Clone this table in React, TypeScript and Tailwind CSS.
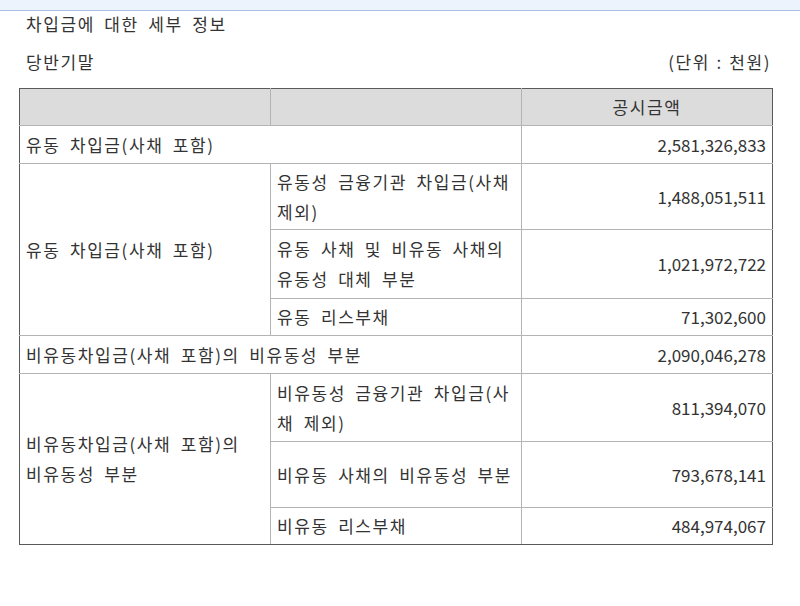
import React from "react";

type Row = {
  label?: string[];
  labelSpan?: number;
  labelRows?: number;
  sub?: string[];
  amount: string;
  h: string;
};

const rows: Row[] = [
  { label: ["유동 차입금(사채 포함)"], labelSpan: 2, amount: "2,581,326,833", h: "h-[38px]" },
  {
    label: ["유동 차입금(사채 포함)"],
    labelRows: 3,
    sub: ["유동성 금융기관 차입금(사채", "제외)"],
    amount: "1,488,051,511",
    h: "h-[66px]",
  },
  { sub: ["유동 사채 및 비유동 사채의", "유동성 대체 부분"], amount: "1,021,972,722", h: "h-[69px]" },
  { sub: ["유동 리스부채"], amount: "71,302,600", h: "h-[37px]" },
  { label: ["비유동차입금(사채 포함)의 비유동성 부분"], labelSpan: 2, amount: "2,090,046,278", h: "h-[38px]" },
  {
    label: ["비유동차입금(사채 포함)의", "비유동성 부분"],
    labelRows: 3,
    sub: ["비유동성 금융기관 차입금(사", "채 제외)"],
    amount: "811,394,070",
    h: "h-[68px]",
  },
  { sub: ["비유동 사채의 비유동성 부분"], amount: "793,678,141", h: "h-[66px]" },
  { sub: ["비유동 리스부채"], amount: "484,974,067", h: "h-[37px]" },
];

function Lines({ lines }: { lines: string[] }) {
  return (
    <>
      {lines.map((l, i) => (
        <div key={i} className="whitespace-nowrap">
          {l}
        </div>
      ))}
    </>
  );
}

export default function App() {
  const cell = "border border-[#b4b4b4] px-[6px] py-0 align-middle leading-[30px]";
  return (
    <div
      className="w-[800px] h-[606px] bg-white text-[#333] text-[17px] tracking-[1.6px] [word-spacing:4px] overflow-hidden"
      style={{ fontFamily: '"Noto Sans CJK KR", "Liberation Sans", sans-serif' }}
    >
      {/* top strip */}
      <div className="h-[11px] bg-[#edf3fc] border-b border-[#a9c1e2]" />

      <div className="px-[19px]">
        <div className="pl-[7px] leading-[26px]">차입금에 대한 세부 정보</div>

        <div className="mt-[12px] flex justify-between pl-[7px] pr-[10px] leading-[26px]">
          <span>당반기말</span>
          <span className="[word-spacing:1px]">(단위 : 천원)</span>
        </div>

        <table className="mt-[13px] w-[753px] table-fixed border-collapse border border-[#5a5a5a]">
          <colgroup>
            <col className="w-[251px]" />
            <col className="w-[251px]" />
            <col className="w-[251px]" />
          </colgroup>
          <thead>
            <tr className="h-[37px] bg-[#dcdcdc]">
              <th className={cell + " border-t-[#5a5a5a] border-l-[#5a5a5a]"} />
              <th className={cell + " border-t-[#5a5a5a]"} />
              <th className={cell + " border-t-[#5a5a5a] border-r-[#5a5a5a] font-normal text-center"}>공시금액</th>
            </tr>
          </thead>
          <tbody>
            {rows.map((r, i) => (
              <tr key={i} className={r.h}>
                {r.label && (
                  <td
                    colSpan={r.labelSpan}
                    rowSpan={r.labelRows}
                    className={cell + " text-left border-l-[#5a5a5a]" + (i === 5 ? " border-b-[#5a5a5a]" : "")}
                  >
                    <Lines lines={r.label} />
                  </td>
                )}
                {r.sub && (
                  <td className={cell + " text-left" + (i === rows.length - 1 ? " border-b-[#5a5a5a]" : "")}>
                    <Lines lines={r.sub} />
                  </td>
                )}
                <td
                  className={
                    cell +
                    " text-right tracking-normal border-r-[#5a5a5a]" +
                    (i === rows.length - 1 ? " border-b-[#5a5a5a]" : "")
                  }
                >
                  {r.amount}
                </td>
              </tr>
            ))}
          </tbody>
        </table>
      </div>
    </div>
  );
}
